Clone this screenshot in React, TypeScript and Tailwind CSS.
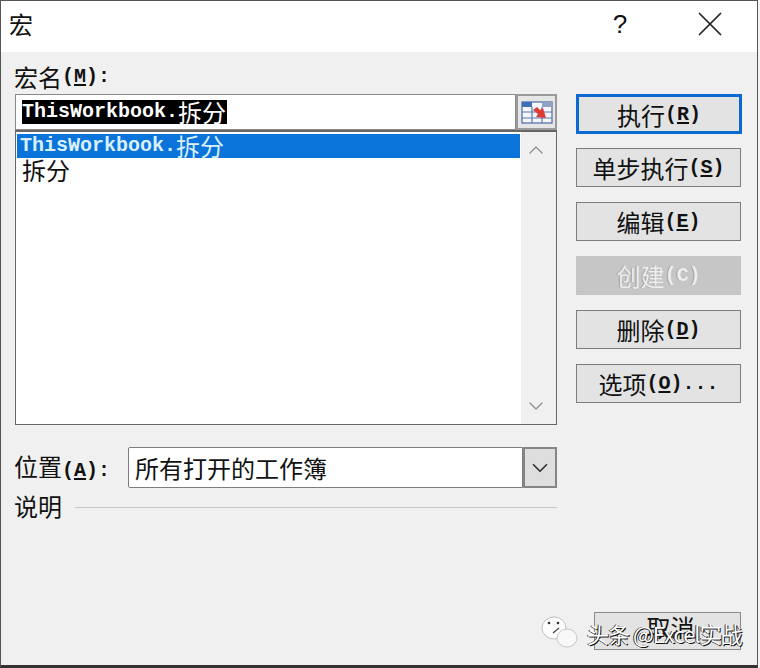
import type { ReactNode } from 'react'
import { ChevronDown, ChevronUp, X } from 'lucide-react'

const cjk = 'font-["Noto_Sans_CJK_SC","Liberation_Sans",sans-serif]'
const mono = 'font-["Liberation_Mono","Noto_Sans_CJK_SC",monospace] text-[20px] font-bold'

// half width latin letters next to the chinese ones, like the old dialog font
function Latin({ children }: { children: ReactNode }) {
  return <span className={mono}>{children}</span>
}

function Key({ children }: { children: string }) {
  return <span className={`${mono} underline underline-offset-2`}>{children}</span>
}

function DialogButton({
  label,
  hotkey,
  tail = '',
  className = '',
}: {
  label: string
  hotkey: string
  tail?: string
  className?: string
}) {
  return (
    <button
      className={`flex h-[39px] w-[165px] shrink-0 items-center justify-center border border-[#7d7d7d] bg-[#e3e3e3] pt-px text-[24px] leading-none text-[#111] ${className}`}
    >
      {label}
      <Latin>(</Latin>
      <Key>{hotkey}</Key>
      <Latin>){tail}</Latin>
    </button>
  )
}

function SheetIcon() {
  return (
    <svg width="32" height="26" viewBox="0 0 32 26">
      <rect x="1" y="3" width="30" height="21" fill="#f4f6fa" stroke="#4a6aa5" strokeWidth="1.2" />
      <rect x="1" y="3" width="10" height="5" fill="#3f6fb5" />
      <rect x="21" y="3" width="10" height="5" fill="#8fa2c4" />
      <path d="M1 13h30M1 19h30M11 8v16M21 8v16" stroke="#5a78ae" strokeWidth="1.2" />
      <path d="M12 11l4-3 3 3 3-2 3 10-10-1 2-3z" fill="#dd3b36" />
    </svg>
  )
}

export default function App() {
  return (
    <div className="h-[668px] w-[760px] bg-[#f4f4f4]">
      <div className={`relative flex h-[668px] w-[758px] flex-col overflow-hidden border-x border-t border-b-[3px] border-x-[#555] border-t-[#555] border-b-[#333] bg-[#f0f0f0] ${cjk}`}>
        {/* Title bar */}
        <div className="flex h-[51px] shrink-0 items-center bg-white pb-[5px] pl-[8px] text-[24px] text-[#111]">
          <span>宏</span>
          <span className="ml-[576px] w-[22px] text-center font-['Liberation_Sans'] text-[26px]">?</span>
          <X className="ml-[58px] h-[42px] w-[42px] text-[#222]" strokeWidth={1} />
        </div>

        <div className="flex flex-1 pl-[13px] pt-[11px]">
          {/* Left column */}
          <div className="flex w-[543px] shrink-0 flex-col">
            <div className="flex h-[31px] items-center pb-[3px] text-[24px] leading-none text-[#111]">
              宏名<Latin>(</Latin>
              <Key>M</Key>
              <Latin>):</Latin>
            </div>

            <div className="ml-px flex h-[36px] shrink-0">
              <div className="flex flex-1 items-center border border-[#8a8a8a] bg-white pl-[6px]">
                <span className="flex h-[24px] items-center bg-black pr-px text-[24px] leading-none text-white">
                  <Latin>ThisWorkbook.</Latin>拆分
                </span>
              </div>
              <div className="flex w-[41px] items-center justify-center border-2 border-[#9a9a9a] bg-[#e6e6e6]">
                <SheetIcon />
              </div>
            </div>

            <div className="ml-px flex h-[295px] shrink-0 border-x border-b border-[#666] border-t-2 bg-white">
              <div className="flex-1 pl-px pt-[2px] text-[24px] leading-none text-[#111]">
                <div className="flex h-[24px] w-[503px] items-center bg-[#0a74da] pl-[3px] text-[#d9f0ff]">
                  <Latin>ThisWorkbook.</Latin>拆分
                </div>
                <div className="flex h-[24px] items-center pl-[5px]">拆分</div>
              </div>
              <div className="flex w-[35px] flex-col items-center justify-between bg-[#f0f0f0] py-[6px] pr-[5px] text-[#8c8c8c]">
                <ChevronUp className="h-[24px] w-[24px]" strokeWidth={1.3} />
                <ChevronDown className="h-[24px] w-[24px]" strokeWidth={1.3} />
              </div>
            </div>

            <div className="mt-[22px] flex h-[41px] shrink-0 items-center">
              <div className="w-[114px] text-[24px] leading-none text-[#111]">
                位置<Latin>(</Latin>
                <Key>A</Key>
                <Latin>):</Latin>
              </div>
              <div className="flex h-[41px] flex-1 items-center rounded-l-[2px] border border-[#7d7d7d] bg-white pl-[6px] text-[24px] text-[#111]">
                所有打开的工作簿
              </div>
              <div className="flex h-[41px] w-[34px] items-center justify-center border-2 border-[#858585] bg-[#dedede] text-[#333]">
                <ChevronDown className="h-[26px] w-[26px]" strokeWidth={1.6} />
              </div>
            </div>

            <div className="mt-[4px] flex h-[28px] items-center text-[24px] leading-none text-[#111]">
              <span>说明</span>
              <div className="ml-[13px] mt-[2px] h-px flex-1 bg-[#c9c5c5]" />
            </div>
          </div>

          {/* Right column */}
          <div className="ml-[19px] flex flex-col pt-[31px]">
            <DialogButton
              label="执行"
              hotkey="R"
              className="!h-[40px] !w-[166px] !border-[3px] !border-[#0a6ad2]"
            />
            <DialogButton label="单步执行" hotkey="S" className="mt-[14px]" />
            <DialogButton label="编辑" hotkey="E" className="mt-[15px]" />
            <button className="mt-[15px] flex h-[39px] w-[165px] shrink-0 items-center justify-center border border-[#c4c4c4] bg-[#c6c6c6] pt-px text-[24px] leading-none text-[#eeeeee] [text-shadow:-1px_0_0_#9a9a9a]">
              创建<Latin>(C)</Latin>
            </button>
            <DialogButton label="删除" hotkey="D" className="mt-[15px]" />
            <DialogButton label="选项" hotkey="O" tail="..." className="mt-[15px]" />
            <div className="relative mt-[209px] ml-[18px]">
              <button className="flex h-[38px] w-[147px] items-start justify-center border border-[#8a8a8a] bg-[#e3e3e3] pl-[6px] pt-[2px] text-[24px] leading-none text-[#111]">
                取消
              </button>
            </div>
          </div>
        </div>

        {/* Watermark over the cancel button */}
        <div className="absolute left-[540px] top-[615px] flex items-center">
          <svg width="38" height="34" viewBox="0 0 38 34">
            <ellipse cx="13" cy="12" rx="12" ry="11" fill="#fdfdfd" stroke="#999" strokeWidth="0.6" />
            <ellipse cx="26" cy="22" rx="10" ry="9" fill="#f8f8f8" stroke="#aaa" strokeWidth="0.6" />
            <circle cx="8" cy="7" r="1.3" fill="#333" />
            <circle cx="17" cy="7" r="1.3" fill="#333" />
            <path d="M12 17l6-5" stroke="#444" strokeWidth="1.2" />
          </svg>
          <span className="ml-[8px] whitespace-nowrap text-[22px] leading-none tracking-[-1px] text-white [text-shadow:1px_1px_0_#111,-1px_0_0_#333]">
            头条 @Excel实战
          </span>
        </div>
      </div>
    </div>
  )
}
